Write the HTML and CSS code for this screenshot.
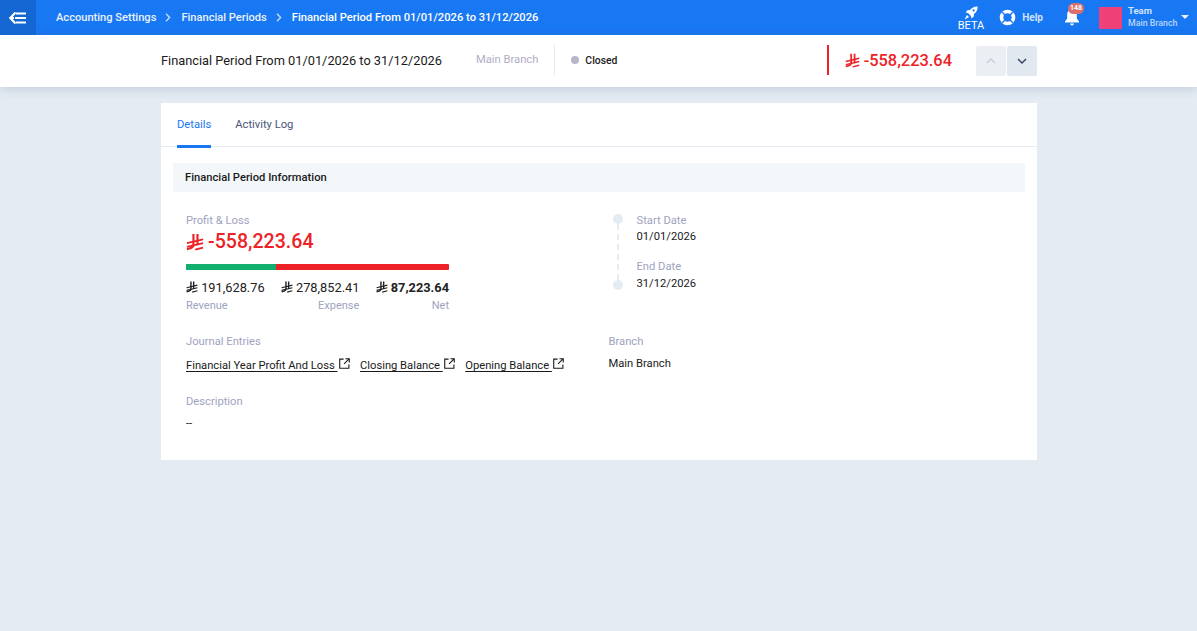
FILE: index.html
```html
<!DOCTYPE html>
<html lang="en">
<head>
    <meta charset="UTF-8">
    <meta name="viewport" content="width=device-width, initial-scale=1.0">
    <title>Financial Period</title>
    <link rel="stylesheet" href="styles.css">
</head>
<body>
    <svg class="defs" width="0" height="0">
        <symbol id="riyal" viewBox="0 0 16 16">
            <path d="M6.600 .8v9.400c0 1.600-1.200 3-3.400 3.600L.8 14.400M10.200 .8v10" fill="none" stroke="currentColor" stroke-width="1.900"/>
            <path d="M.8 9L15.200 5.600M.8 12.400L15.200 9M8.200 14.800l7-1.800" fill="none" stroke="currentColor" stroke-width="1.600"/>
        </symbol>
        <symbol id="ext" viewBox="0 0 12 12">
            <path d="M5 1.200H.8v10h10V7M7 .8h4.200V5M11 1L5.500 6.500" fill="none" stroke="currentColor" stroke-width="1.200"/>
        </symbol>
    </svg>

    <header class="topbar">
        <a class="back-btn">
            <svg width="18" height="12" viewBox="0 0 18 12"><path d="M6.500 .5L1.200 6l5.300 5.500M1.500 6H5" fill="none" stroke="#fff" stroke-width="2.200"/><path d="M7 1.600h10M6 6h11M7 10.400h10" stroke="#fff" stroke-width="2"/></svg>
        </a>
        <nav class="crumbs">
            <a>Accounting Settings</a>
            <svg class="crumb-sep" width="6" height="9" viewBox="0 0 6 9"><path d="M1 .8L4.600 4.500 1 8.200" fill="none" stroke="#c5dcfb" stroke-width="1.400"/></svg>
            <a>Financial Periods</a>
            <svg class="crumb-sep" width="6" height="9" viewBox="0 0 6 9"><path d="M1 .8L4.600 4.500 1 8.200" fill="none" stroke="#c5dcfb" stroke-width="1.400"/></svg>
            <span>Financial Period From 01/01/2026 to 31/12/2026</span>
        </nav>
        <div class="top-actions">
            <div class="beta">
                <svg width="14" height="14" viewBox="0 0 14 14"><path d="M13.600 .4c-3.200-.2-5.600 1-7.600 3.600L3.400 4.200 1.600 6.600l2.400.4 3 3 .4 2.400 2.400-1.800.2-2.600c2.600-2 3.800-4.400 3.600-7.600z" fill="#fff"/><circle cx="9.600" cy="4.400" r="1.100" fill="#1877f2"/><path d="M3 9L.6 13.400 5 11z" fill="#fff"/></svg>
                <span>BETA</span>
            </div>
            <div class="help">
                <svg width="17" height="17" viewBox="0 0 17 17"><circle cx="8.500" cy="8.500" r="6" fill="none" stroke="#fff" stroke-width="3.600"/><path d="M3.200 3.200l3 3M13.800 3.200l-3 3M3.200 13.800l3-3M13.800 13.800l-3-3" stroke="#1877f2" stroke-width="1.500"/></svg>
                <span>Help</span>
            </div>
            <div class="bell">
                <svg width="16" height="17" viewBox="0 0 16 17"><path d="M8 .5c-3 0-4.800 2.200-4.800 5v4L1 12.600v1h14v-1l-2.200-3.100v-4C12.800 2.700 11 .5 8 .5zM6 14.500c.2 1.200 1 1.900 2 1.900s1.800-.7 2-1.900z" fill="#fff"/></svg>
                <span class="badge">148</span>
            </div>
            <div class="user">
                <div class="avatar"></div>
                <div class="user-text">
                    <strong>Team</strong>
                    <small>Main Branch</small>
                </div>
                <span class="caret"></span>
            </div>
        </div>
    </header>

    <section class="subbar">
        <div class="subbar-inner">
            <h1>Financial Period From 01/01/2026 to 31/12/2026</h1>
            <span class="sub-branch">Main Branch</span>
            <span class="status"><i></i>Closed</span>
            <div class="sub-total">
                <svg class="cur"><use href="#riyal"/></svg>
                <span>-558,223.64</span>
            </div>
            <div class="pager">
                <button class="prev"><svg width="10" height="6" viewBox="0 0 10 6"><path d="M1 5l4-4 4 4" fill="none" stroke="#c9ced9" stroke-width="1.500"/></svg></button>
                <button class="next"><svg width="10" height="6" viewBox="0 0 10 6"><path d="M1 1l4 4 4-4" fill="none" stroke="#3d4a6b" stroke-width="1.500"/></svg></button>
            </div>
        </div>
    </section>

    <main class="card">
        <div class="tabs">
            <a class="tab tab-active">Details</a>
            <a class="tab">Activity Log</a>
        </div>
        <div class="section-title">Financial Period Information</div>

        <div class="info-row">
            <div class="pnl">
                <div class="label">Profit &amp; Loss</div>
                <div class="pnl-total">
                    <svg class="cur"><use href="#riyal"/></svg>
                    <span>-558,223.64</span>
                </div>
                <div class="bar"><div class="bar-green"></div></div>
                <div class="pnl-cols">
                    <div class="pnl-col">
                        <div class="pnl-val"><svg class="cur-sm"><use href="#riyal"/></svg> 191,628.76</div>
                        <div class="label">Revenue</div>
                    </div>
                    <div class="pnl-col col-mid">
                        <div class="pnl-val"><svg class="cur-sm"><use href="#riyal"/></svg> 278,852.41</div>
                        <div class="label">Expense</div>
                    </div>
                    <div class="pnl-col col-end">
                        <div class="pnl-val net"><svg class="cur-sm"><use href="#riyal"/></svg> 87,223.64</div>
                        <div class="label">Net</div>
                    </div>
                </div>
            </div>
            <div class="dates">
                <div class="timeline"><i></i><b></b><i></i></div>
                <div class="date-list">
                    <div class="date-item">
                        <div class="label">Start Date</div>
                        <div class="value">01/01/2026</div>
                    </div>
                    <div class="date-item">
                        <div class="label">End Date</div>
                        <div class="value">31/12/2026</div>
                    </div>
                </div>
            </div>
        </div>

        <div class="info-row row-journal">
            <div class="journal">
                <div class="label">Journal Entries</div>
                <div class="links">
                    <a class="link"><u>Financial Year Profit And Loss </u><svg class="ext"><use href="#ext"/></svg></a>
                    <a class="link"><u>Closing Balance </u><svg class="ext"><use href="#ext"/></svg></a>
                    <a class="link"><u>Opening Balance </u><svg class="ext"><use href="#ext"/></svg></a>
                </div>
            </div>
            <div class="branch">
                <div class="label">Branch</div>
                <div class="value">Main Branch</div>
            </div>
        </div>

        <div class="desc">
            <div class="label">Description</div>
            <div class="value">--</div>
        </div>
    </main>
</body>
</html>
```

FILE: styles.css
```css
* {
    box-sizing: border-box;
}

body {
    font-family: 'Roboto', 'Liberation Sans', sans-serif;
    background-color: #e4ebf2;
    margin: 0;
    min-height: 631px;
    color: #111;
    font-size: 11.200px;
}

.defs {
    position: absolute;
}

/* Top bar */
.topbar {
    height: 35px;
    background-color: #1877f2;
    display: flex;
    align-items: center;
    color: white;
}

.back-btn {
    width: 36px;
    height: 35px;
    background-color: #1466d2;
    display: flex;
    align-items: center;
    justify-content: center;
}

.crumbs {
    display: flex;
    align-items: center;
    margin-left: 20px;
    font-size: 11.200px;
    font-weight: 500;
    color: #e8f1fe;
}

.crumbs a {
    font-size: 11.100px;
}

.crumb-sep {
    margin: 0 10px 0 9px;
}

.crumbs span {
    color: white;
}

.top-actions {
    margin-left: auto;
    display: flex;
    align-items: center;
    height: 35px;
}

.beta {
    display: flex;
    flex-direction: column;
    align-items: center;
    font-size: 11px;
    line-height: 12px;
    margin-top: 2px;
}

.help {
    display: flex;
    align-items: center;
    gap: 6px;
    margin-left: 15px;
    font-size: 10px;
    font-weight: 700;
    color: #cfe2fc;
}

.bell {
    position: relative;
    display: flex;
    margin-left: 21px;
}

.badge {
    position: absolute;
    top: -6px;
    left: 4px;
    width: 16px;
    height: 11px;
    border-radius: 6px;
    background-color: #d9706f;
    color: white;
    font-size: 7px;
    font-weight: 700;
    line-height: 11px;
    text-align: center;
}

.user {
    display: flex;
    align-items: center;
    margin-left: 19px;
    width: 98px;
    position: relative;
}

.avatar {
    width: 23px;
    height: 22px;
    background-color: #ef4078;
}

.user-text {
    margin: -2px 0 0 6px;
    display: flex;
    flex-direction: column;
    line-height: 12px;
    color: #cfe2fc;
}

.user-text strong {
    font-weight: 700;
    font-size: 9.500px;
}

.user-text small {
    font-size: 8.800px;
    font-weight: 500;
    color: #b9d5fb;
}

.caret {
    position: absolute;
    right: 8px;
    top: 8px;
    border: 4px solid transparent;
    border-top-color: #e8f1fe;
    border-bottom-width: 0;
}

/* Header strip under the bar */
.subbar {
    height: 52px;
    background-color: white;
    box-shadow: 0 2px 10px rgba(60, 80, 120, 0.2);
}

.subbar-inner {
    width: 876px;
    height: 50px;
    margin-left: 161px;
    display: flex;
    align-items: center;
}

.subbar h1 {
    margin: 0;
    font-size: 12.800px;
    font-weight: 400;
    color: #1a1a1a;
}

.sub-branch {
    margin-left: 34px;
    font-size: 11.200px;
    color: #b0aec4;
    height: 30px;
    line-height: 30px;
    padding-right: 16px;
    border-right: 1px solid #e4ebf2;
}

.status {
    margin-left: 16px;
    display: flex;
    align-items: center;
    gap: 6px;
    font-size: 10.400px;
    font-weight: 500;
    color: #222;
}

.status i {
    width: 8px;
    height: 8px;
    border-radius: 50%;
    background-color: #b8b6ca;
}

.sub-total {
    margin-left: auto;
    height: 30px;
    display: flex;
    align-items: center;
    gap: 4px;
    padding-left: 16px;
    border-left: 2px solid #ec2227;
    color: #ec2227;
    font-size: 16.400px;
    font-weight: 500;
}

.cur {
    width: 15px;
    height: 15px;
}

.pager {
    display: flex;
    gap: 1px;
    margin: 2px 0 0 24px;
}

.pager button {
    width: 30px;
    height: 30px;
    border: none;
    padding: 0;
    border-radius: 2px;
    display: flex;
    align-items: center;
    justify-content: center;
}

.prev {
    background-color: #ebeff4;
}

.next {
    background-color: #e2e8f0;
}

/* Main card */
.card {
    width: 876px;
    height: 357px;
    margin: 16px 0 0 161px;
    background-color: white;
    padding-bottom: 20px;
}

.tabs {
    display: flex;
    height: 44px;
    padding-left: 16px;
    gap: 24px;
    border-bottom: 1px solid #e4ebf2;
}

.tab {
    height: 45px;
    padding-top: 15px;
    font-size: 11.200px;
    color: #4a5578;
}

.tab-active {
    color: #1877f2;
    border-bottom: 3px solid #1877f2;
}

.section-title {
    margin: 16px 12px 0;
    height: 29px;
    line-height: 29px;
    padding-left: 12px;
    background-color: #f4f7fa;
    font-size: 11.200px;
    font-weight: 500;
    color: #1a1a1a;
}

.label {
    font-size: 11.200px;
    line-height: 14px;
    color: #9ea3c0;
}

.value {
    font-size: 11.200px;
    line-height: 14px;
    color: #1a1a1a;
}

.info-row {
    display: flex;
    padding-left: 25px;
    margin-top: 22px;
}

.pnl {
    width: 263px;
}

.pnl-total {
    display: flex;
    align-items: center;
    gap: 4px;
    margin-top: 2px;
    font-size: 19.600px;
    font-weight: 500;
    color: #ec2227;
    line-height: 24px;
}

.pnl-total .cur {
    width: 18px;
    height: 18px;
}

.bar {
    height: 6px;
    margin-top: 10px;
    background-color: #ec2227;
    border-radius: 1px;
    overflow: hidden;
}

.bar-green {
    width: 34.200%;
    height: 6px;
    background-color: #11b06f;
}

.pnl-cols {
    display: flex;
    justify-content: space-between;
    margin-top: 10px;
}

.pnl-val {
    font-size: 12.800px;
    line-height: 16px;
    color: #222;
    white-space: nowrap;
}

.pnl-val.net {
    font-weight: 700;
}

.cur-sm {
    width: 12px;
    height: 12px;
    vertical-align: -1px;
}

.pnl-col .label {
    margin-top: 3px;
    font-size: 11px;
}

.col-mid {
    text-align: right;
}

.col-end {
    text-align: right;
}

.dates {
    display: flex;
    margin-left: 163.500px;
}

.timeline {
    width: 10px;
    height: 76px;
    display: flex;
    flex-direction: column;
    align-items: center;
}

.timeline i {
    width: 10px;
    height: 10px;
    border-radius: 50%;
    background-color: #e4ebf2;
    flex: none;
}

.timeline b {
    flex: 1;
    border-left: 2px dashed #e4ebf2;
}

.date-list {
    margin-left: 14px;
    display: flex;
    flex-direction: column;
    gap: 16px;
}

.date-item .value {
    margin-top: 2px;
}

.date-item:last-child .value {
    margin-top: 3px;
}

.row-journal {
    margin-top: 22px;
}

.journal {
    width: 422.500px;
}

.links {
    display: flex;
    gap: 10.500px;
    margin-top: 9px;
}

.link {
    display: flex;
    align-items: flex-start;
    gap: 1px;
    font-size: 11.200px;
    line-height: 15px;
    color: #1a1a1a;
    white-space: pre;
}

.link u {
    text-underline-offset: 2px;
}

.ext {
    width: 11px;
    height: 11px;
}

.branch .value {
    margin-top: 8px;
}

.desc {
    padding-left: 25px;
    margin-top: 22px;
}

.desc .value {
    margin-top: 8px;
}
```
